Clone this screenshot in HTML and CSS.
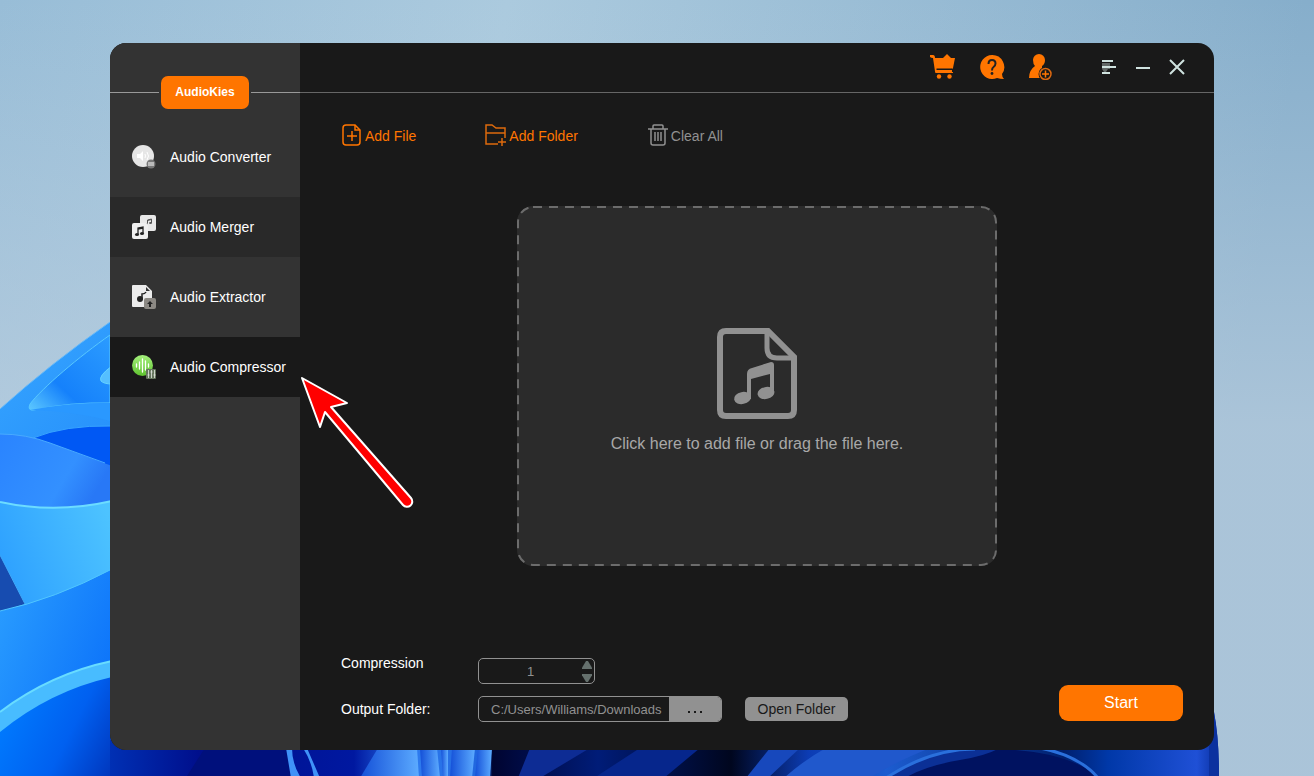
FILE: index.html
```html
<!DOCTYPE html>
<html lang="en">
<head>
    <meta charset="UTF-8">
    <meta name="viewport" content="width=device-width, initial-scale=1.0">
    <title>AudioKies</title>
    <link rel="stylesheet" href="styles.css">
</head>
<body>
    <svg class="wallpaper" viewBox="0 0 1314 776" preserveAspectRatio="none" aria-hidden="true">
        <defs>
            <linearGradient id="petal" x1="0" y1="0" x2="0.6" y2="1">
                <stop offset="0" stop-color="#37a6ff"/>
                <stop offset="1" stop-color="#0a6cf5"/>
            </linearGradient>
            <linearGradient id="inner" x1="0" y1="1" x2="1" y2="0">
                <stop offset="0" stop-color="#5cc8ff"/>
                <stop offset="0.35" stop-color="#1581fb"/>
                <stop offset="1" stop-color="#2c9cff"/>
            </linearGradient>
            <linearGradient id="fold" x1="0" y1="0" x2="1" y2="0.4">
                <stop offset="0" stop-color="#2a84ff"/>
                <stop offset="0.7" stop-color="#3390ff"/>
                <stop offset="1" stop-color="#2878f6"/>
            </linearGradient>
            <linearGradient id="cyan" x1="0" y1="0.6" x2="1" y2="0.2">
                <stop offset="0" stop-color="#2da0ff"/>
                <stop offset="1" stop-color="#4dc3ff"/>
            </linearGradient>
            <linearGradient id="wave" x1="0" y1="0" x2="1" y2="0.6">
                <stop offset="0" stop-color="#2b9fff"/>
                <stop offset="1" stop-color="#0d74fa"/>
            </linearGradient>
            <linearGradient id="deep" gradientUnits="userSpaceOnUse" x1="0" y1="710" x2="130" y2="776">
                <stop offset="0" stop-color="#007cff"/>
                <stop offset="0.5" stop-color="#0060f0"/>
                <stop offset="1" stop-color="#002aae"/>
            </linearGradient>
            <linearGradient id="floor" gradientUnits="userSpaceOnUse" x1="110" y1="0" x2="1219" y2="0">
                <stop offset="0" stop-color="#0030b4"/>
                <stop offset="0.08" stop-color="#000f8c"/>
                <stop offset="0.22" stop-color="#0018a0"/>
                <stop offset="0.27" stop-color="#2f7df0"/>
                <stop offset="0.34" stop-color="#1e63dc"/>
                <stop offset="0.345" stop-color="#000430"/>
                <stop offset="0.44" stop-color="#001c78"/>
                <stop offset="0.56" stop-color="#00061e"/>
                <stop offset="0.63" stop-color="#0c3cb4"/>
                <stop offset="0.7" stop-color="#1c5cd0"/>
                <stop offset="0.86" stop-color="#00206e"/>
                <stop offset="0.9" stop-color="#0038a8"/>
                <stop offset="0.98" stop-color="#1f50d6"/>
                <stop offset="1" stop-color="#0a30a0"/>
            </linearGradient>
            <linearGradient id="stripe" x1="0" y1="0" x2="1" y2="0">
                <stop offset="0" stop-color="#1450d8"/>
                <stop offset="1" stop-color="#5cabff"/>
            </linearGradient>
        </defs>
        <path d="M0 409Q50 364 110 322H300V776H0z" fill="url(#petal)"/>
        <path d="M0 409Q50 364 110 322" fill="none" stroke="#67baf8"/>
        <path d="M110 335C80 356 42 388 30 404Q27 411 34 410Q70 402 110 403z" fill="url(#inner)" stroke="#58c8ff"/>
        <path d="M30 410Q70 402 110 403V421Q75 411 30 410z" fill="#2a98ff"/>
        <path d="M112 366Q98 376 101 381Q104 384 112 384z" fill="#55bfff" stroke="#66d4ff"/>
        <path d="M33 438Q65 425 112 426V470z" fill="#0058f4"/>
        <path d="M33 438Q65 425 112 426" fill="none" stroke="#38a4ff"/>
        <path d="M0 434Q26 434 50 443L112 466V510H0z" fill="url(#fold)"/>
        <path d="M0 434Q26 434 50 443L105 463" fill="none" stroke="#48aaff"/>
        <path d="M0 502Q55 514 112 501V580L0 620z" fill="url(#cyan)"/>
        <path d="M0 502Q55 514 112 501" fill="none" stroke="#6cdcff" stroke-width="2"/>
        <path d="M0 555L25 604L0 612z" fill="#174cb0"/>
        <path d="M0 555L25 604" fill="none" stroke="#3ea8f8"/>
        <path d="M0 611Q55 599 112 569V680L0 735z" fill="url(#wave)"/>
        <path d="M0 611Q55 599 112 569" fill="none" stroke="#50c6ff"/>
        <path d="M0 712Q50 674 112 661V776H0z" fill="#48bcff"/>
        <path d="M0 712Q50 674 112 661" fill="none" stroke="#68dcff" stroke-width="2"/>
        <path d="M0 732Q50 691 112 677V776H0z" fill="url(#deep)"/>
        <path d="M110 740H1213L1214 712Q1219 738 1219 776H110z" fill="url(#floor)"/>
        <path d="M187 776L210 740H286L294 776z" fill="#00107c"/>
        <path d="M286 748L291 778H301Q292 764 292 748z" fill="#3f92f8"/>
        <path d="M303 748Q312 762 314 778H320Q313 762 307 748z" fill="#3f92f8"/>
        <path d="M378 748L360 778H419L417 748z" fill="url(#stripe)"/>
        <path d="M420 748H437L440 778H422z" fill="url(#stripe)"/>
        <path d="M441 748H448V778H443z" fill="url(#stripe)"/>
        <path d="M452 748H475L472 778H450z" fill="url(#stripe)"/>
        <path d="M478 748H492L490 778H475z" fill="url(#stripe)"/>
        <path d="M518 778L530 748H590L540 778z" fill="#0d2c94"/>
        <path d="M594 778L640 748H700L664 778z" fill="#06268c"/>
        <path d="M746 778L770 748H800L768 778z" fill="#1748bc"/>
        <path d="M784 778Q804 760 826 748H930Q895 762 870 778z" fill="#2058cc"/>
        <path d="M886 778Q940 745 1000 749Q1070 752 1100 778z" fill="#001260"/>
        <path d="M886 778Q935 745 1000 748Q985 756 960 760Q925 766 905 778z" fill="#0b3096"/>
        <path d="M886 778Q930 749 975 749M1040 748Q1080 756 1098 778" fill="none" stroke="#2a70dc" stroke-width="3"/>
        <path d="M1209 748V776H1219Q1219 738 1214 712z" fill="#0b319f"/>
    </svg>

    <div class="app-window">
        <aside class="sidebar">
            <div class="brand"><span class="brand-name">AudioKies</span></div>
            <nav class="menu">
                <a class="menu-item" href="#converter">
                    <svg width="24" height="24" viewBox="0 0 24 24">
                        <circle cx="11" cy="11" r="11" fill="#e6e6e6"/>
                        <path d="M5 9h3l3-3v10l-3-3H5z" fill="#fff"/>
                        <path d="M13 9q1 2 0 4M15 7q3 4 0 8" fill="none" stroke="#fff"/>
                        <circle cx="19" cy="19" r="4.500" fill="#777"/>
                        <path d="M16 18h6M16 20h6" fill="none" stroke="#fff"/>
                    </svg>
                    Audio Converter
                </a>
                <a class="menu-item shaded" href="#merger">
                    <svg width="24" height="24" viewBox="0 0 24 24">
                        <rect x="8" width="16" height="16" rx="2" fill="#e8e8e8"/>
                        <path d="M15.500 9V5l4-1v4M15.500 5.500l4-1" fill="none" stroke="#555"/>
                        <ellipse cx="14.500" cy="9" rx="1.500" ry="1" fill="#555"/>
                        <ellipse cx="18.500" cy="8" rx="1.500" ry="1" fill="#555"/>
                        <rect y="8" width="16" height="16" rx="2" fill="#efefef"/>
                        <path d="M6 19v-6l5-1v6M6 14l5-1" fill="none" stroke="#222" stroke-width="1.3"/>
                        <ellipse cx="5" cy="19.500" rx="2" ry="1.500" fill="#222"/>
                        <ellipse cx="10" cy="18.500" rx="2" ry="1.500" fill="#222"/>
                    </svg>
                    Audio Merger
                </a>
                <a class="menu-item" href="#extractor">
                    <svg width="24" height="24" viewBox="0 0 24 24">
                        <path d="M1 0h13l6 6v15q0 1-1 1H1q-1 0-1-1V1q0-1 1-1z" fill="#ececec"/>
                        <path d="M14 2v4h4z" fill="#333"/>
                        <path d="M10 14V9q3 0 4-2" fill="none" stroke="#222" stroke-width="1.500"/>
                        <circle cx="8" cy="14" r="3" fill="#222"/>
                        <rect x="12" y="13" width="12" height="11" rx="2" fill="#8c8984"/>
                        <path d="M18 16l3 3h-2v3h-2v-3h-2z" fill="#222"/>
                    </svg>
                    Audio Extractor
                </a>
                <a class="menu-item active" href="#compressor">
                    <svg width="24" height="24" viewBox="0 0 24 24">
                        <defs>
                            <linearGradient id="leaf" x1="0" y1="0" x2="0" y2="1">
                                <stop offset="0" stop-color="#a4f07c"/>
                                <stop offset="1" stop-color="#5fc22f"/>
                            </linearGradient>
                        </defs>
                        <circle cx="10.500" cy="10.500" r="10.500" fill="url(#leaf)"/>
                        <path d="M4.500 9v3M7.500 7v7M10.500 4v13M13.500 6v9M16.500 9v3" stroke="#fff" stroke-width="1.300" stroke-linecap="round"/>
                        <rect x="14" y="14" width="10" height="10" rx="1" fill="#65755d"/>
                        <path d="M16.500 15v8M19.500 15v8M22.500 15v8M15.500 20h2M18.500 17h2M21.500 20h2" stroke="#e4e8e2" stroke-width="0.800"/>
                    </svg>
                    Audio Compressor
                </a>
            </nav>
        </aside>

        <main class="content">
            <header class="titlebar">
                <div class="links">
                    <button class="icon-btn" aria-label="Buy">
                        <svg width="26" height="26" viewBox="0 0 26 26" fill="#ff7500">
                            <path d="M0 1h3q2 0 2 3h20l-2 10q0 1-2 1H7v3h16v1H6q-1 0-1-1.500L3 4Q1 4 0 3z"/>
                            <path d="M13 4l4-4 4 4z"/>
                            <path d="M6.500 14.500h15.500v1.500H6.500z" fill="#191919"/>
                            <path d="M6 16h16v2.500H6z"/>
                            <circle cx="9" cy="22.500" r="2.200"/>
                            <circle cx="19.500" cy="22.500" r="2.200"/>
                        </svg>
                    </button>
                    <button class="icon-btn" aria-label="Help">
                        <svg width="26" height="26" viewBox="0 0 26 26">
                            <path d="M13 1a12 12 0 1 0 5 23q3 1 7 1-2-2-2-5A12 12 0 0 0 13 1z" fill="#ff7500"/>
                            <path d="M9.500 10q0-4 3.500-4t3.500 3.500q0 2-2 3.500-1.500 1-1.500 3.500" fill="none" stroke="#222" stroke-width="2"/>
                            <circle cx="13" cy="19.500" r="1.400" fill="#222"/>
                        </svg>
                    </button>
                    <button class="icon-btn" aria-label="Account">
                        <svg width="26" height="26" viewBox="0 0 26 26">
                            <path d="M11 0a6 6 0 0 0-6 6q0 4 2 6-6 4-6 12h13V12q3-2 3-6a6 6 0 0 0-6-6z" fill="#ff7500"/>
                            <circle cx="17.500" cy="20" r="7" fill="#191919"/>
                            <circle cx="17.500" cy="20" r="5.500" fill="none" stroke="#dc6810" stroke-width="1.500"/>
                            <path d="M17.500 16.500v7M14 20h7" stroke="#ff7500" stroke-width="1.500"/>
                        </svg>
                    </button>
                </div>
                <div class="window-controls">
                    <button class="icon-btn" aria-label="Menu">
                        <svg width="18" height="18" viewBox="0 0 18 18">
                            <path d="M2 5h8v6H8l-2 3H4l-2-3z" fill="#626867"/>
                            <path d="M2 3h11M2 9h14M2 15h8" stroke="#cfe2df" stroke-width="2"/>
                        </svg>
                    </button>
                    <button class="icon-btn" aria-label="Minimize">
                        <svg width="18" height="18" viewBox="0 0 18 18"><path d="M2 10h14" stroke="#cfe2df" stroke-width="2"/></svg>
                    </button>
                    <button class="icon-btn" aria-label="Close">
                        <svg width="18" height="18" viewBox="0 0 18 18"><path d="M2 2l14 14M16 2L2 16" stroke="#cfe2df" stroke-width="2"/></svg>
                    </button>
                </div>
            </header>

            <div class="toolbar">
                <button class="tool-btn">
                    <svg width="22" height="22" viewBox="0 0 22 22" fill="none" stroke="#ff7500" stroke-width="1.500">
                        <path d="M5 1h9l5 5v12q0 3-3 3H5q-3 0-3-3V4q0-3 3-3z"/>
                        <path d="M14 1v5h5M11 7v10M6 12h10"/>
                    </svg>
                    <span>Add File</span>
                </button>
                <button class="tool-btn">
                    <svg width="22" height="22" viewBox="0 0 22 22" fill="none" stroke="#dd6a0c" stroke-width="1.500">
                        <path d="M13 20H1V1h6l4 3h9v10M1 9h19M17 14v8M13 18h8"/>
                    </svg>
                    <span>Add Folder</span>
                </button>
                <button class="tool-btn muted">
                    <svg width="22" height="22" viewBox="0 0 22 22" fill="none" stroke="#919191" stroke-width="1.500">
                        <path d="M1 5h20M6 5V2q0-1 1-1h8q1 0 1 1v3M4 5v14q0 2 2 2h10q2 0 2-2V5M8 8v9M11 8v9M14 8v9"/>
                    </svg>
                    <span>Clear All</span>
                </button>
            </div>

            <div class="drop-area">
                <button class="dropzone">
                    <svg class="dashes" aria-hidden="true"><rect x="1" y="1" rx="15"/></svg>
                    <svg width="80" height="92" viewBox="0 0 80 92">
                        <path d="M9 3h42l26 26v53q0 6-6 6H9q-6 0-6-6V9q0-6 6-6z" fill="none" stroke="#919191" stroke-width="6"/>
                        <path d="M50 3v17q0 10 10 10h18" fill="none" stroke="#919191" stroke-width="5"/>
                        <path d="M30 46q0-5 5-6l19-6q3 0 3 3v29h-4V46l-19 5v20h-4z" fill="#919191"/>
                        <ellipse cx="25.500" cy="70" rx="8.500" ry="6" transform="rotate(-12 25.500 70)" fill="#919191"/>
                        <ellipse cx="49" cy="65" rx="8.500" ry="6" transform="rotate(-12 49 65)" fill="#919191"/>
                    </svg>
                    <span>Click here to add file or drag the file here.</span>
                </button>
            </div>

            <footer class="bottom-bar">
                <div class="settings">
                    <label for="compression" class="top-label">Compression</label>
                    <div class="spinbox">
                        <input type="number" id="compression" value="1" min="1">
                        <div class="arrows">
                            <button class="arrow up" aria-label="Increase"></button>
                            <button class="arrow down" aria-label="Decrease"></button>
                        </div>
                    </div>
                    <label for="folder">Output Folder:</label>
                    <div class="folder-row">
                        <div class="path-box">
                            <input type="text" id="folder" value="C:/Users/Williams/Downloads">
                            <button class="browse" aria-label="Browse"><svg width="16" height="4" viewBox="0 0 16 4" fill="#191919"><path d="M1 1h2v2H1zM7 1h2v2H7zM13 1h2v2h-2z"/></svg></button>
                        </div>
                        <button class="open-folder">Open Folder</button>
                    </div>
                </div>
                <button class="start">Start</button>
            </footer>
        </main>
    </div>

    <svg class="pointer" width="120" height="136" viewBox="0 0 120 136" aria-hidden="true">
        <path d="M5 4L50 29 34 33 114 124A5 5 0 0 1 106 131L28 38 23 53z" fill="#f00" stroke="#fff" stroke-width="2" stroke-linejoin="round"/>
    </svg>
</body>
</html>
```
FILE: styles.css
```css
* {
    box-sizing: border-box;
}

body {
    margin: 0;
    min-height: 100vh;
    padding: 43px 100px 26px 110px;
    display: flex;
    font-family: "Liberation Sans", Arial, sans-serif;
    font-size: 14px;
    color: #fff;
    background:
        linear-gradient(to bottom, rgba(190, 208, 224, 0) 0%, rgba(190, 208, 224, 0.65) 55%),
        linear-gradient(100deg, #98bdd7 0%, #abcade 35%, #86aecb 90%);
}

button,
input {
    font: inherit;
    color: inherit;
    border: none;
    background: none;
    padding: 0;
    margin: 0;
}

button {
    cursor: pointer;
}

svg {
    display: block;
    flex-shrink: 0;
}

.wallpaper {
    position: absolute;
    top: 0;
    left: 0;
    width: 100%;
    height: 100%;
    z-index: -1;
}

.app-window {
    flex: 1;
    display: flex;
    background: #191919;
    border-radius: 16px;
    overflow: hidden;
}

/* sidebar */
.sidebar {
    width: 190px;
    flex-shrink: 0;
    background: #333;
}

.brand {
    display: flex;
    align-items: center;
    gap: 2px;
    margin: 33px 0 18px;
}

.brand::before,
.brand::after {
    content: "";
    flex: 1;
    height: 1px;
    background: #999;
}

.brand-name {
    width: 88px;
    line-height: 33px;
    border-radius: 7px;
    background: #ff7500;
    font-size: 12px;
    font-weight: bold;
    text-align: center;
}

.menu {
    display: flex;
    flex-direction: column;
    gap: 10px;
}

.menu-item {
    display: flex;
    align-items: center;
    gap: 14px;
    height: 60px;
    padding-left: 22px;
    color: #fff;
    text-decoration: none;
    white-space: nowrap;
}

.shaded {
    background: #292929;
}

.active {
    background: #191919;
}

/* main column */
.content {
    flex: 1;
    display: flex;
    flex-direction: column;
}

.titlebar {
    display: flex;
    justify-content: flex-end;
    align-items: center;
    gap: 46px;
    height: 50px;
    padding: 0 28px 2px 0;
    border-bottom: 1px solid #666;
}

.links {
    display: flex;
    gap: 23px;
}

.window-controls {
    display: flex;
    gap: 16px;
}

.toolbar {
    display: flex;
    gap: 69px;
    padding: 31px 41px 0;
}

.tool-btn {
    display: flex;
    align-items: center;
    gap: 2px;
    color: #ff7500;
}

.tool-btn span {
    padding-top: 2px;
}

.tool-btn.muted {
    color: #919191;
}

.drop-area {
    flex: 1;
    display: flex;
    align-items: center;
    justify-content: center;
}

.dropzone {
    position: relative;
    display: flex;
    flex-direction: column;
    align-items: center;
    justify-content: center;
    gap: 14px;
    width: 480px;
    height: 360px;
    padding-top: 9px;
    border-radius: 16px;
    background: #2b2b2b;
    color: #a8a8a8;
    font-size: 16px;
    line-height: 20px;
}

.dashes {
    position: absolute;
    top: 0;
    left: 0;
    width: 100%;
    height: 100%;
}

.dashes rect {
    width: calc(100% - 2px);
    height: calc(100% - 2px);
    fill: none;
    stroke: #6c6c6c;
    stroke-width: 2px;
    stroke-dasharray: 9 7;
}

/* bottom settings */
.bottom-bar {
    display: flex;
    justify-content: space-between;
    align-items: flex-end;
    padding: 28px 31px 28px 41px;
}

.settings {
    display: grid;
    grid-template-columns: 137px auto;
    grid-template-rows: 30px 26px;
    row-gap: 12px;
    align-items: center;
}

.top-label {
    align-self: start;
    line-height: 18px;
}

.spinbox {
    align-self: end;
    display: flex;
    width: 117px;
    height: 26px;
    padding-right: 2px;
    border: 1px solid #919191;
    border-radius: 5px;
}

.spinbox input {
    flex: 1;
    min-width: 0;
    text-align: center;
    font-size: 13px;
    color: #919191;
    appearance: textfield;
}

.spinbox input::-webkit-inner-spin-button {
    display: none;
}

.arrows {
    display: flex;
    flex-direction: column;
    justify-content: space-between;
    padding: 2px 0 1px;
}

.arrow {
    width: 10px;
    height: 8px;
    background: #65706d;
}

.up {
    clip-path: polygon(40% 0, 60% 0, 100% 85%, 100% 100%, 0 100%, 0 85%);
}

.down {
    clip-path: polygon(0 0, 100% 0, 100% 15%, 60% 100%, 40% 100%, 0 15%);
}

.folder-row {
    display: flex;
    align-items: center;
    gap: 23px;
}

.path-box {
    display: flex;
    width: 244px;
    height: 26px;
    border: 1px solid #919191;
    border-radius: 5px;
    overflow: hidden;
}

.path-box input {
    flex: 1;
    min-width: 0;
    padding-left: 12px;
    font-size: 13px;
    color: #919191;
}

.browse {
    display: flex;
    align-items: center;
    justify-content: center;
    width: 52px;
    padding-top: 6px;
    background: #919191;
}

.open-folder {
    width: 103px;
    height: 24px;
    border-radius: 5px;
    background: #919191;
    color: #191919;
}

.start {
    width: 124px;
    height: 36px;
    margin-bottom: 1px;
    border-radius: 9px;
    background: #ff7500;
    font-size: 16px;
}

/* arrow lying over the window */
.pointer {
    position: absolute;
    top: 374px;
    left: 297px;
    pointer-events: none;
}
```
